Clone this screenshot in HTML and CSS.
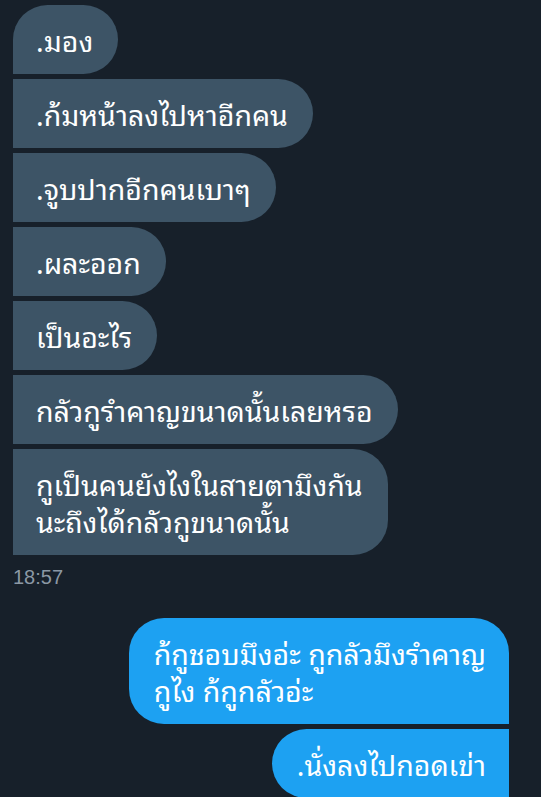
FILE: index.html
```html
<!DOCTYPE html>
<html lang="th">
<head>
<meta charset="utf-8">
<link rel="stylesheet" href="styles.css">
</head>
<body>
<main class="chat">
  <section class="group group-in">
    <div class="bubble in first">.มอง</div>
    <div class="bubble in">.ก้มหน้าลงไปหาอีกคน</div>
    <div class="bubble in">.จูบปากอีกคนเบาๆ</div>
    <div class="bubble in">.ผละออก</div>
    <div class="bubble in">เป็นอะไร</div>
    <div class="bubble in">กลัวกูรำคาญขนาดนั้นเลยหรอ</div>
    <div class="bubble in last">กูเป็นคนยังไงในสายตามึงกัน<br>นะถึงได้กลัวกูขนาดนั้น</div>
  </section>
  <div class="time">18:57</div>
  <section class="group group-out">
    <div class="bubble out first">ก้กูชอบมึงอ่ะ กูกลัวมึงรำคาญ<br>กูไง ก้กูกลัวอ่ะ</div>
    <div class="bubble out">.นั่งลงไปกอดเข่า</div>
  </section>
</main>
</body>
</html>
```

FILE: styles.css
```css
html, body {
  margin: 0;
  padding: 0;
  background: #17202a;
  height: 100%;
  overflow: hidden;
}
.chat {
  display: flex;
  flex-direction: column;
  padding: 5px 32px 0 13px;
  font-family: "Noto Sans Thai Looped", "Noto Sans Thai", "Noto Sans", sans-serif;
}
.group {
  display: flex;
  flex-direction: column;
  gap: 5px;
}
.group-in { align-items: flex-start; }
.group-out { align-items: flex-end; margin-top: 29px; }
.bubble {
  color: #ffffff;
  font-size: 28.5px;
  line-height: 37px;
  padding: 16px 25px 16px 23px;
  white-space: nowrap;
  box-sizing: border-box;
}
.bubble.in {
  background: #3d5466;
  border-radius: 0 35px 35px 0;
}
.bubble.in.first { border-top-left-radius: 35px; }
.bubble.out {
  background: #1da1f2;
  border-radius: 35px 0 0 35px;
  padding: 16px 23px 16px 25px;
}
.bubble.out.first { border-top-right-radius: 35px; }
.time {
  color: #8b98a5;
  font-size: 20px;
  line-height: 24px;
  margin-top: 10px;
  font-family: "Liberation Sans", Arial, sans-serif;
}
```
